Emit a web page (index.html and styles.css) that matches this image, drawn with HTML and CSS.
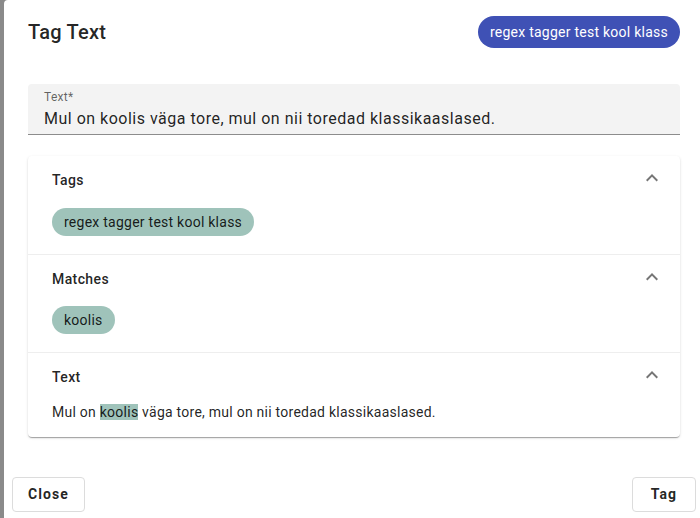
FILE: index.html
```html
<!DOCTYPE html>
<html>
<head>
<meta charset="utf-8">
<link rel="stylesheet" href="styles.css">
</head>
<body>
<div class="dialog">
  <div class="dialog-header">
    <h2 class="dialog-title">Tag Text</h2>
    <span class="chip chip-primary">regex tagger test kool klass</span>
  </div>
  <div class="dialog-content">
    <div class="text-field">
      <label class="field-label">Text*</label>
      <div class="field-value">Mul on koolis väga tore, mul on nii toredad klassikaaslased.</div>
    </div>
    <div class="card">
      <section class="panel">
        <div class="panel-header">
          <span class="panel-title">Tags</span>
          <svg class="chevron" viewBox="0 0 24 24" width="24" height="24"><path d="M12 8l-6 6 1.41 1.41L12 10.83l4.59 4.58L18 14z"/></svg>
        </div>
        <div class="panel-body">
          <span class="chip chip-green">regex tagger test kool klass</span>
        </div>
      </section>
      <section class="panel">
        <div class="panel-header">
          <span class="panel-title">Matches</span>
          <svg class="chevron" viewBox="0 0 24 24" width="24" height="24"><path d="M12 8l-6 6 1.41 1.41L12 10.83l4.59 4.58L18 14z"/></svg>
        </div>
        <div class="panel-body">
          <span class="chip chip-green">koolis</span>
        </div>
      </section>
      <section class="panel">
        <div class="panel-header">
          <span class="panel-title">Text</span>
          <svg class="chevron" viewBox="0 0 24 24" width="24" height="24"><path d="M12 8l-6 6 1.41 1.41L12 10.83l4.59 4.58L18 14z"/></svg>
        </div>
        <div class="panel-body panel-text">
          Mul on <mark class="hl">koolis</mark> väga tore, mul on nii toredad klassikaaslased.
        </div>
      </section>
    </div>
  </div>
  <div class="dialog-actions">
    <button class="btn">Close</button>
    <button class="btn">Tag</button>
  </div>
</div>
</body>
</html>
```

FILE: styles.css
```css
html, body {
  margin: 0;
  padding: 0;
  height: 100%;
  overflow: hidden;
}
body {
  background: #8a8a8a;
  font-family: Roboto, "Liberation Sans", sans-serif;
  color: rgba(0, 0, 0, 0.87);
}
.dialog {
  margin-left: 4px;
  width: 700px;
  height: 530px;
  background: #fff;
  border-radius: 4px;
  display: flex;
  flex-direction: column;
  box-sizing: border-box;
}
.dialog-header {
  display: flex;
  align-items: center;
  justify-content: space-between;
  padding: 16px 24px 0 24px;
}
.dialog-title {
  margin: 0;
  font-size: 20px;
  font-weight: 500;
  line-height: 32px;
  letter-spacing: 0.25px;
}
.chip {
  display: inline-flex;
  align-items: center;
  border-radius: 16px;
  font-size: 14px;
  letter-spacing: 0.25px;
  padding: 0 12px;
  white-space: nowrap;
}
.chip-primary {
  height: 32px;
  background: #3f51b5;
  color: #fff;
}
.chip-green {
  height: 28px;
  border-radius: 14px;
  background: #9fc3ba;
  color: rgba(0, 0, 0, 0.87);
}
.dialog-content {
  padding: 36px 24px 0 24px;
  display: flex;
  flex-direction: column;
}
.text-field {
  background: #f3f3f3;
  border-radius: 4px 4px 0 0;
  border-bottom: 1px solid #8c8c8c;
  padding: 6px 16px 6px 16px;
  display: flex;
  flex-direction: column;
  gap: 5px;
}
.field-label {
  font-size: 12px;
  line-height: 14px;
  letter-spacing: 0.3px;
  color: rgba(0, 0, 0, 0.6);
}
.field-value {
  font-size: 16px;
  line-height: 19px;
  letter-spacing: 0.5px;
}
.card {
  margin-top: 21px;
  background: #fff;
  border-radius: 4px;
  box-shadow: 0 2px 1px -1px rgba(0,0,0,0.2), 0 1px 1px 0 rgba(0,0,0,0.14), 0 1px 3px 0 rgba(0,0,0,0.12);
}
.panel + .panel {
  border-top: 1px solid #eeeeee;
}
.panel-header {
  height: 47px;
  display: flex;
  align-items: center;
  justify-content: space-between;
  padding: 0 16px 0 24px;
}
.panel-title {
  font-size: 14px;
  font-weight: 500;
  letter-spacing: 0.4px;
  color: rgba(0, 0, 0, 0.87);
}
.chevron {
  fill: rgba(0, 0, 0, 0.54);
  margin-bottom: 3px;
}
.panel-body {
  padding: 5px 24px 18px 24px;
  display: flex;
}
.panel:nth-child(2) .panel-body {
  padding-top: 4px;
}
.panel-text {
  display: block;
  padding: 2px 24px 15px 24px;
  font-size: 14px;
  line-height: 20px;
  letter-spacing: 0.25px;
}
.hl {
  background: #9fc3ba;
  color: rgba(0, 0, 0, 0.87);
}
.dialog-actions {
  display: flex;
  justify-content: space-between;
  padding: 40px 8px 8px 8px;
}
.btn {
  font-family: Roboto, "Liberation Sans", sans-serif;
  font-size: 14px;
  font-weight: 700;
  letter-spacing: 1.1px;
  line-height: 21px;
  min-width: 64px;
  padding: 6px 15px;
  background: #fff;
  color: rgba(0, 0, 0, 0.87);
  border: 1px solid #dcdcdc;
  border-radius: 4px;
}
```
